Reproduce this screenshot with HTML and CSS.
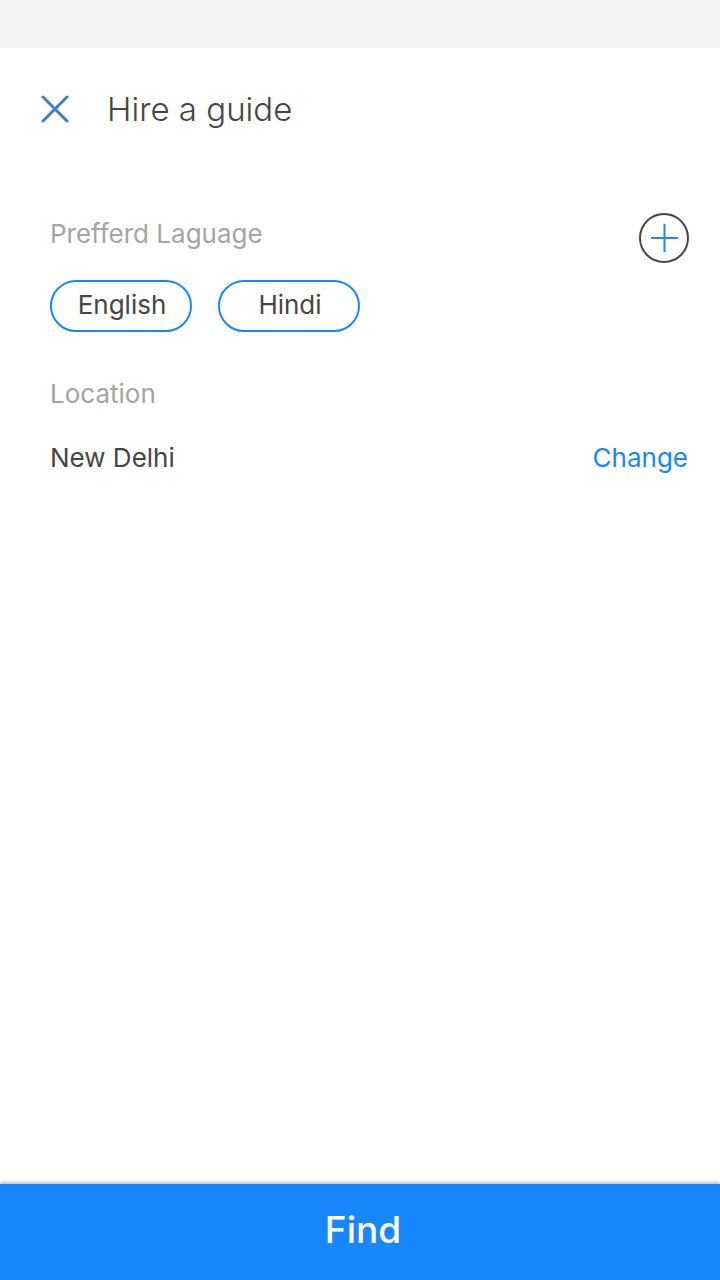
FILE: index.html
```html
<!DOCTYPE html>
<html lang="en">
<head>
<meta charset="utf-8">
<meta name="viewport" content="width=device-width, initial-scale=1">
<title>Hire a guide</title>
<link rel="stylesheet" href="styles.css">
</head>
<body>
<div class="status-bar"></div>
<header class="header">
  <button class="icon-button" type="button" aria-label="Close">
    <svg class="close-icon" viewBox="0 0 28 28" aria-hidden="true"><path d="M2 2L26 26M26 2L2 26"/></svg>
  </button>
  <h1 class="title">Hire a guide</h1>
</header>
<main class="content">
  <section class="languages">
    <div class="section-head">
      <h2 class="label">Prefferd Laguage</h2>
      <button class="icon-button" type="button" aria-label="Add language">
        <svg class="add-icon" viewBox="0 0 50 50" aria-hidden="true"><circle cx="25" cy="25" r="24"/><path d="M12 25H39M25.5 11V39"/></svg>
      </button>
    </div>
    <div class="chips">
      <button class="chip" type="button">English</button>
      <button class="chip" type="button">Hindi</button>
    </div>
  </section>
  <section class="location">
    <h2 class="label">Location</h2>
    <div class="location-row">
      <span>New Delhi</span>
      <a class="change" href="#location">Change</a>
    </div>
  </section>
</main>
<button class="find" type="button">Find</button>
</body>
</html>
```
FILE: styles.css
```css
* { box-sizing: border-box; }
body {
  display: flex;
  flex-direction: column;
  min-height: 100vh;
  margin: 0;
  background: #fff;
  color: #454545;
  font-family: Inter, "Liberation Sans", sans-serif;
  font-size: 26px;
  line-height: 32px;
}
button {
  border: 0;
  background: none;
  color: inherit;
  font: inherit;
  cursor: pointer;
}
.status-bar { height: 48px; background: #f3f3f3; }
.header {
  display: flex;
  align-items: center;
  gap: 38px;
  padding: 39px 32px 41px 41px;
}
.icon-button { display: block; padding: 0; }
.close-icon {
  display: block;
  width: 28px;
  height: 28px;
  fill: none;
  stroke: #3f7cc4;
  stroke-width: 3;
  stroke-linecap: round;
}
.title { margin: 0; font-size: 33px; font-weight: 300; line-height: 44px; }
.content { flex: 1; padding: 41px 32px 32px 50px; }
.section-head {
  display: flex;
  align-items: flex-start;
  justify-content: space-between;
  margin-right: -1px;
}
.label { margin: 0; color: #a4a4a4; font-size: 26px; font-weight: 400; }
.section-head .label { padding-top: 5px; }
.add-icon {
  display: block;
  width: 50px;
  height: 50px;
  fill: none;
  stroke: #1987fc;
  stroke-width: 2;
}
.add-icon circle { stroke: #454545; }
.chips { display: flex; flex-wrap: wrap; gap: 26px; margin-top: 17px; }
.chip {
  min-width: 142px;
  height: 52px;
  padding: 0 20px 2px 22px;
  border: 2px solid #1987fc;
  border-radius: 26px;
}
.location { margin-top: 46px; }
.location-row {
  display: flex;
  justify-content: space-between;
  margin-top: 32px;
}
.change { color: #1987fc; text-decoration: none; }
.find {
  height: 96px;
  padding: 0 0 4px 6px;
  background: #1987fc;
  box-shadow: 0 -1px 4px rgba(0, 0, 0, 0.35);
  color: #fff;
  font-size: 37px;
  font-weight: 500;
}
```
